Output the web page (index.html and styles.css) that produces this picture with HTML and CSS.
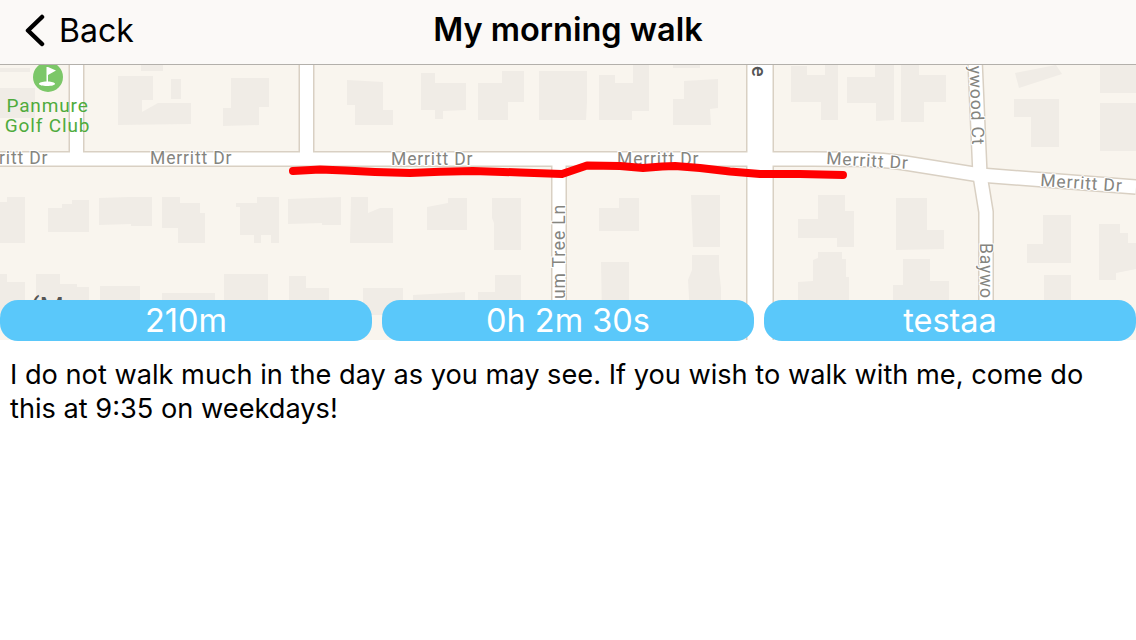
FILE: index.html
```html
<!DOCTYPE html>
<html lang="en">
<head>
    <meta charset="UTF-8">
    <meta name="viewport" content="width=device-width, initial-scale=1.0">
    <title>My morning walk</title>
    <link rel="stylesheet" href="styles.css">
</head>
<body>
    <header class="nav-bar">
        <a class="back-link">
            <svg class="back-chevron" width="22" height="34" viewBox="0 0 22 34">
                <path d="M18 3 L4 16.500 L18 30" />
            </svg>
            <span>Back</span>
        </a>
        <h1 class="nav-title">My morning walk</h1>
    </header>

    <div class="map">
        <svg class="map-canvas" width="1136" height="275" viewBox="0 65 1136 275">
            <rect class="land" x="0" y="65" width="1136" height="275" />

            <g class="buildings">
                <polygon points="0,68 30,68 30,72 0,72" />
                <polygon points="0,88 35,88 35,118 0,118" />
                <polygon points="141,65 163,65 163,71 141,71" />
                <polygon points="118,76 153,76 153,100 142,100 142,112 158,103 191,103 191,124 118,125" />
                <polygon points="171,79 181,79 181,99 171,99" />
                <polygon points="231,78 269,78 269,107 259,107 259,125 223,126 223,108 231,108" />
                <polygon points="347,80 383,82 383,110 393,110 393,125 355,125 355,105 347,105" />
                <polygon points="421,73 435,73 435,83 466,83 466,110 443,111 443,119 435,119 435,110 421,110" />
                <polygon points="478,83 502,83 502,71 524,71 524,102 508,102 508,120 478,120" />
                <polygon points="539,71 587,71 587,102 586,120 539,120" />
                <polygon points="599,75 615,75 615,83 633,83 633,65 649,65 649,111 632,111 632,120 599,120" />
                <polygon points="684,81 718,79 718,108 710,109 711,125 673,125 673,99 684,99" />
                <polygon points="673,65 700,65 700,68 673,68" />
                <polygon points="791,66 807,66 807,75 825,75 825,65 838,65 838,120 821,120 821,102 791,102" />
                <polygon points="847,77 875,77 875,65 894,65 894,120 876,121 876,103 847,103" />
                <polygon points="901,65 919,65 919,75 946,75 946,102 924,102 924,122 901,122" />
                <polygon points="1015,73 1056,65 1062,74 1019,88" />
                <polygon points="1014,99 1059,99 1059,147 1031,147 1031,117 1014,117" />
                <polygon points="1100,65 1136,65 1136,93 1100,93" />
                <polygon points="1100,103 1136,103 1136,151 1100,151" />

                <polygon points="0,202 7,202 7,197 25,197 25,243 0,243" />
                <polygon points="48,208 62,208 62,204 72,204 72,200 89,200 89,232 48,232" />
                <polygon points="99,198 128,197 152,197 152,226 131,226 131,224 99,225" />
                <polygon points="162,197 180,197 180,203 200,203 200,213 205,213 205,243 178,243 178,228 162,228" />
                <polygon points="236,203 257,203 257,197 279,197 279,243 271,243 271,235 261,235 261,243 254,243 254,235 240,235 240,207 236,207" />
                <polygon points="288,199 341,197 341,225 322,225 322,223 288,224" />
                <polygon points="351,197 368,197 368,213 380,208 393,208 393,243 350,243" />
                <polygon points="427,207 448,203 448,198 467,198 467,230 427,230" />
                <polygon points="492,198 521,198 521,250 494,250 494,223 492,218" />
                <polygon points="599,208 619,208 619,198 639,198 639,231 599,231" />
                <polygon points="691,195 720,195 720,247 693,247" />
                <polygon points="798,219 818,219 818,195 845,195 845,211 854,211 854,247 837,247 837,238 798,238" />
                <polygon points="896,198 927,198 927,230 944,230 944,249 896,250" />
                <polygon points="1027,244 1043,244 1043,215 1071,215 1071,263 1027,263" />
                <polygon points="1099,224 1120,224 1120,233 1128,233 1128,243 1136,243 1136,269 1116,273 1116,280 1099,280" />

                <polygon points="0,274 7,274 7,282 25,282 25,315 0,315" />
                <polygon points="36,274 60,274 60,284 77,284 77,287 89,287 89,315 36,315" />
                <polygon points="100,286 140,286 140,315 100,315" />
                <polygon points="162,293 215,293 215,315 162,315" />
                <polygon points="224,274 268,274 268,315 224,315" />
                <polygon points="289,276 306,276 306,288 329,288 329,315 289,315" />
                <polygon points="363,288 403,288 403,315 363,315" />
                <polygon points="413,295 465,292 465,315 413,315" />
                <polygon points="478,292 495,292 495,275 521,275 521,315 478,315" />
                <polygon points="601,262 629,262 629,315 602,315" />
                <polygon points="692,255 719,255 719,270 721,288 721,315 690,315 688,280 692,270" />
                <polygon points="798,282 813,281 813,260 818,258 818,252 842,252 842,259 846,259 846,277 849,277 849,315 798,315" />
                <polygon points="893,285 903,285 903,259 930,259 930,281 949,281 949,315 893,315" />
                <polygon points="1044,275 1071,275 1071,315 1044,315" />
            </g>

            <g class="road-casing">
                <path d="M76.500 60 V159" />
                <path d="M306.500 60 V159" />
                <path d="M559 159 V345" />
                <path d="M975 60 L980 175 L986 212 V345" />
                <path d="M-10 159 H773 C830 159 870 158 905 163 L980 175 L1136 187" />
                <path class="road-wide" d="M760 60 V345" />
            </g>
            <g class="road-fill">
                <path d="M76.500 60 V159" />
                <path d="M306.500 60 V159" />
                <path d="M559 159 V345" />
                <path d="M975 60 L980 175 L986 212 V345" />
                <path d="M-10 159 H773 C830 159 870 158 905 163 L980 175 L1136 187" />
                <path class="road-wide" d="M760 60 V345" />
            </g>

            <g class="road-labels">
                <text x="-34" y="164">Merritt Dr</text>
                <text x="150" y="164">Merritt Dr</text>
                <text x="391" y="165">Merritt Dr</text>
                <text x="617" y="165">Merritt Dr</text>
                <text transform="translate(826 164) rotate(3.500)">Merritt Dr</text>
                <text transform="translate(1040 186) rotate(4)">Merritt Dr</text>
                <text transform="translate(565 299) rotate(-90)">um Tree Ln</text>
                <text transform="translate(969.500 66) rotate(88)">ywood Ct</text>
                <text transform="translate(980 243) rotate(90)">Baywo</text>
            </g>

            <text class="area-label" transform="translate(752 66) rotate(90)">e</text>
            <text class="city-label" x="30" y="317">(M</text>

            <g class="poi">
                <circle class="poi-disc" cx="48" cy="77" r="15" />
                <path class="poi-glyph" d="M46.500 67 H48 L56 70.500 L48 75 V81.500 C51.500 81.700 55 82.500 55 83.800 C55 85.300 51.500 86 47 86 C42.500 86 39 85.300 39 83.800 C39 82.500 42.500 81.700 46.500 81.500 Z" />
                <text class="poi-label" x="47.500" y="112">Panmure</text>
                <text class="poi-label" x="47.500" y="132">Golf Club</text>
            </g>

            <path class="route" d="M293 171 L320 169.500 L345 170.500 L375 172 L410 173 L440 171.800 L473 171 L520 172.500 L562 174 L587 165.500 L620 166 L643 168 L662 166.500 L675 166 L700 168 L730 171.500 L760 174 L800 174 L843 175" />
        </svg>
    </div>

    <div class="stats">
        <div class="stat-pill">210m</div>
        <div class="stat-pill">0h 2m 30s</div>
        <div class="stat-pill">testaa</div>
    </div>

    <p class="description">I do not walk much in the day as you may see. If you wish to walk with me, come do this at 9:35 on weekdays!</p>
</body>
</html>
```

FILE: styles.css
```css
* {
    box-sizing: border-box;
}
body {
    margin: 0;
    background-color: #fff;
    color: #000;
    font-family: Inter, "Noto Sans", sans-serif;
}

.nav-bar {
    position: relative;
    display: flex;
    align-items: center;
    justify-content: center;
    height: 65px;
    padding-bottom: 5px;
    background-color: #fbf9f7;
    border-bottom: 1px solid #b3b0ab;
}
.back-link {
    position: absolute;
    left: 24px;
    top: 14px;
    display: flex;
    align-items: center;
    gap: 13px;
    font-size: 32px;
    line-height: 34px;
}
.back-chevron {
    display: block;
}
.back-chevron path {
    fill: none;
    stroke: #000;
    stroke-width: 4.500;
    stroke-linecap: round;
    stroke-linejoin: round;
}
.nav-title {
    margin: 0;
    font-size: 32.500px;
    font-weight: 600;
}

.map {
    height: 275px;
    overflow: hidden;
}
.map-canvas {
    display: block;
}
.land {
    fill: #f9f5ee;
}
.buildings polygon {
    fill: #f0ece6;
}
.road-casing path,
.road-fill path {
    fill: none;
}
.road-casing path {
    stroke: #d9d0c3;
    stroke-width: 16;
}
.road-fill path {
    stroke: #fff;
    stroke-width: 13;
}
.road-casing .road-wide {
    stroke-width: 28;
}
.road-fill .road-wide {
    stroke-width: 25;
}
.road-labels text {
    fill: #85857f;
    stroke: #fff;
    stroke-width: 2;
    paint-order: stroke;
    font-family: Roboto, sans-serif;
    font-size: 17.500px;
    letter-spacing: 0.850px;
}
.area-label {
    fill: #555;
    font-family: Roboto, sans-serif;
    font-size: 20px;
    font-weight: 500;
}
.city-label {
    fill: #555;
    font-family: Roboto, sans-serif;
    font-size: 28px;
}
.poi-disc {
    fill: #7cc768;
}
.poi-glyph {
    fill: #fff;
}
.poi-label {
    fill: #4fab3c;
    font-family: Roboto, sans-serif;
    font-size: 19px;
    letter-spacing: 0.850px;
    text-anchor: middle;
}
.route {
    fill: none;
    stroke: #ff0000;
    stroke-width: 8;
    stroke-linecap: round;
    stroke-linejoin: round;
}

.stats {
    display: flex;
    gap: 10px;
    margin-top: -40px;
    position: relative;
}
.stat-pill {
    flex: 1;
    height: 41px;
    border-radius: 18px;
    background-color: #5ac8fa;
    color: #fff;
    font-size: 32.500px;
    line-height: 41px;
    text-align: center;
}

.description {
    margin: 0;
    padding: 17px 10px;
    font-size: 27.200px;
    line-height: 34px;
}
```
